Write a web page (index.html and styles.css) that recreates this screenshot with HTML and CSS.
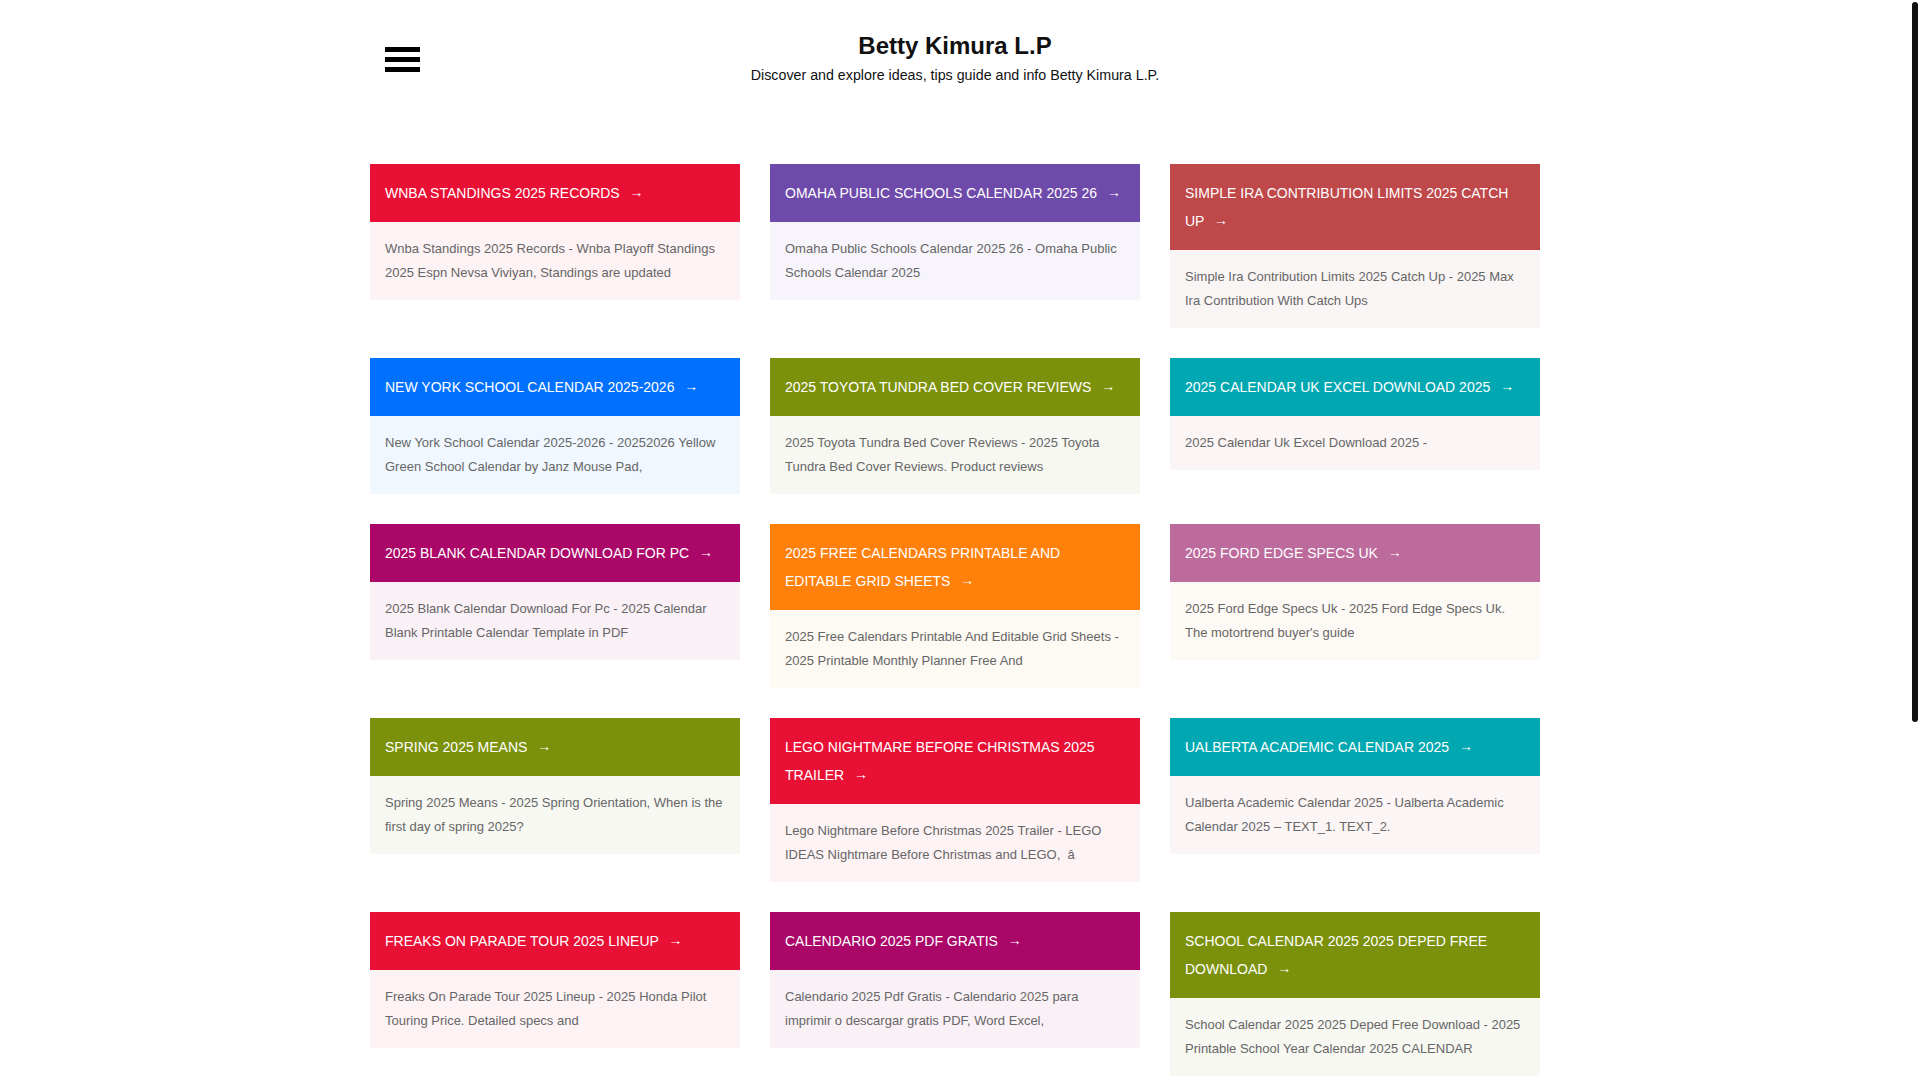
FILE: index.html
```html
<!DOCTYPE html>
<html lang="en">
<head>
<meta charset="utf-8">
<title>Betty Kimura L.P</title>
<link rel="stylesheet" href="styles.css">
</head>
<body>
<header class="site-header">
  <div class="header-left">
    <button class="menu-btn" aria-label="Menu"><span></span><span></span><span></span></button>
  </div>
  <div class="brand">
    <h1 class="site-title">Betty Kimura L.P</h1>
    <p class="site-desc">Discover and explore ideas, tips guide and info Betty Kimura L.P.</p>
  </div>
  <div class="header-right"></div>
</header>
<main class="grid">
  <article class="card c-red"><h2 class="card-title">WNBA STANDINGS 2025 RECORDS <span class="arr">→</span></h2><p class="card-body">Wnba Standings 2025 Records - Wnba Playoff Standings 2025 Espn Nevsa Viviyan, Standings are updated</p></article>
  <article class="card c-purple"><h2 class="card-title">OMAHA PUBLIC SCHOOLS CALENDAR 2025 26 <span class="arr">→</span></h2><p class="card-body">Omaha Public Schools Calendar 2025 26 - Omaha Public Schools Calendar 2025</p></article>
  <article class="card c-brick"><h2 class="card-title">SIMPLE IRA CONTRIBUTION LIMITS 2025 CATCH UP <span class="arr">→</span></h2><p class="card-body">Simple Ira Contribution Limits 2025 Catch Up - 2025 Max Ira Contribution With Catch Ups</p></article>

  <article class="card c-blue"><h2 class="card-title">NEW YORK SCHOOL CALENDAR 2025-2026 <span class="arr">→</span></h2><p class="card-body">New York School Calendar 2025-2026 - 20252026 Yellow Green School Calendar by Janz Mouse Pad,</p></article>
  <article class="card c-olive"><h2 class="card-title">2025 TOYOTA TUNDRA BED COVER REVIEWS <span class="arr">→</span></h2><p class="card-body">2025 Toyota Tundra Bed Cover Reviews - 2025 Toyota Tundra Bed Cover Reviews. Product reviews</p></article>
  <article class="card c-teal"><h2 class="card-title">2025 CALENDAR UK EXCEL DOWNLOAD 2025 <span class="arr">→</span></h2><p class="card-body">2025 Calendar Uk Excel Download 2025 -</p></article>

  <article class="card c-magenta"><h2 class="card-title">2025 BLANK CALENDAR DOWNLOAD FOR PC <span class="arr">→</span></h2><p class="card-body">2025 Blank Calendar Download For Pc - 2025 Calendar Blank Printable Calendar Template in PDF</p></article>
  <article class="card c-orange"><h2 class="card-title">2025 FREE CALENDARS PRINTABLE AND EDITABLE GRID SHEETS <span class="arr">→</span></h2><p class="card-body">2025 Free Calendars Printable And Editable Grid Sheets - 2025 Printable Monthly Planner Free And</p></article>
  <article class="card c-mauve"><h2 class="card-title">2025 FORD EDGE SPECS UK <span class="arr">→</span></h2><p class="card-body">2025 Ford Edge Specs Uk - 2025 Ford Edge Specs Uk. The motortrend buyer's guide</p></article>

  <article class="card c-olive"><h2 class="card-title">SPRING 2025 MEANS <span class="arr">→</span></h2><p class="card-body">Spring 2025 Means - 2025 Spring Orientation, When is the first day of spring 2025?</p></article>
  <article class="card c-red"><h2 class="card-title">LEGO NIGHTMARE BEFORE CHRISTMAS 2025 TRAILER <span class="arr">→</span></h2><p class="card-body">Lego Nightmare Before Christmas 2025 Trailer - LEGO IDEAS Nightmare Before Christmas and LEGO,&nbsp; â</p></article>
  <article class="card c-teal"><h2 class="card-title">UALBERTA ACADEMIC CALENDAR 2025 <span class="arr">→</span></h2><p class="card-body">Ualberta Academic Calendar 2025 - Ualberta Academic Calendar 2025 – TEXT_1. TEXT_2.</p></article>

  <article class="card c-red"><h2 class="card-title">FREAKS ON PARADE TOUR 2025 LINEUP <span class="arr">→</span></h2><p class="card-body">Freaks On Parade Tour 2025 Lineup - 2025 Honda Pilot Touring Price. Detailed specs and</p></article>
  <article class="card c-magenta"><h2 class="card-title">CALENDARIO 2025 PDF GRATIS <span class="arr">→</span></h2><p class="card-body">Calendario 2025 Pdf Gratis - Calendario 2025 para imprimir o descargar gratis PDF, Word Excel,</p></article>
  <article class="card c-olive"><h2 class="card-title">SCHOOL CALENDAR 2025 2025 DEPED FREE DOWNLOAD <span class="arr">→</span></h2><p class="card-body">School Calendar 2025 2025 Deped Free Download - 2025 Printable School Year Calendar 2025 CALENDAR</p></article>
</main>
<div class="scrollbar" aria-hidden="true"><div class="scrollbar-thumb"></div></div>
</body>
</html>
```

FILE: styles.css
```css
html {
  background: #fff;
}

body {
  margin: 0 10px 0 0;
  min-height: 1615px;
  font-family: "Liberation Sans", Arial, sans-serif;
  color: #111;
  background: #fff;
}

/* page scrollbar drawn over the right edge */
.scrollbar {
  position: fixed;
  top: 0;
  right: 0;
  width: 8px;
  height: 100%;
  background: #fff;
}

.scrollbar-thumb {
  position: absolute;
  top: 2px;
  left: 0;
  width: 6px;
  height: 720px;
  background: #111;
  border-radius: 3px;
}

.site-header {
  width: 1170px;
  margin: 0 auto;
  padding-top: 32px;
  display: grid;
  grid-template-columns: 1fr auto 1fr;
  align-items: start;
}

.header-left {
  padding-left: 15px;
  padding-top: 15px;
}

.menu-btn {
  display: flex;
  flex-direction: column;
  gap: 5px;
  width: 36px;
  padding: 0;
  margin: 0;
  border: 0;
  background: transparent;
  cursor: pointer;
}

.menu-btn span {
  display: block;
  width: 35px;
  height: 5px;
  background: #000;
}

.brand {
  text-align: center;
}

.site-title {
  margin: 0;
  font-size: 24px;
  line-height: 28px;
  font-weight: 700;
  color: #111;
}

.site-desc {
  margin: 7px 0 0;
  font-size: 14.25px;
  line-height: 16px;
  color: #111;
}

.grid {
  width: 1170px;
  margin: 0 auto;
  padding-top: 81px;
  display: grid;
  grid-template-columns: repeat(3, 370px);
  column-gap: 30px;
  row-gap: 30px;
  align-items: start;
}

.card {
  margin: 0;
}

.card-title {
  margin: 0;
  padding: 15px;
  font-size: 14px;
  line-height: 28px;
  font-weight: 400;
  color: #fff;
  text-transform: uppercase;
}

.arr {
  margin-left: 6px;
  font-size: 14px;
  line-height: 14px;
  vertical-align: 1px;
}

.card-body {
  margin: 0;
  padding: 15px;
  font-size: 13px;
  line-height: 24px;
  color: #666;
}

.c-red .card-title { background: #e91035; }
.c-red .card-body { background: #fdf3f5; }

.c-purple .card-title { background: #6e4aaa; }
.c-purple .card-body { background: #f7f5fb; }

.c-brick .card-title { background: #bf484a; }
.c-brick .card-body { background: #faf5f5; }

.c-blue .card-title { background: #0070ff; }
.c-blue .card-body { background: #f0f7ff; }

.c-olive .card-title { background: #7b910b; }
.c-olive .card-body { background: #f8f8f3; }

.c-teal .card-title { background: #02a8b1; }
.c-teal .card-body { background: #fbf5f5; }

.c-magenta .card-title { background: #ab0769; }
.c-magenta .card-body { background: #faf1f7; }

.c-orange .card-title { background: #ff800b; }
.c-orange .card-body { background: #fdf9f3; }

.c-mauve .card-title { background: #bd6a9c; }
.c-mauve .card-body { background: #fdf9f4; }
```
